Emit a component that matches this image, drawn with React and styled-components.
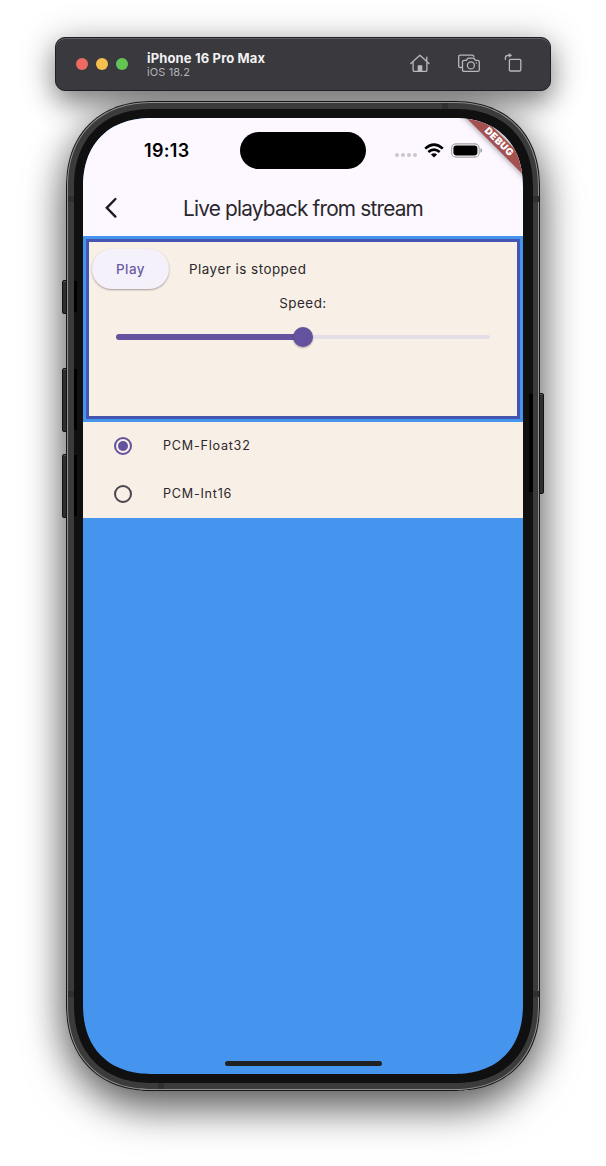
import React from "react";
import styled, { createGlobalStyle } from "styled-components";

const GlobalStyle = createGlobalStyle`
  *, *::before, *::after { box-sizing: border-box; }
  body {
    margin: 0;
    background: #fff;
    font-family: Inter, "Liberation Sans", sans-serif;
    overflow: hidden;
  }
`;

const Desktop = styled.main`
  width: 606px;
  height: 1166px;
  padding-top: 37px;
  display: flex;
  flex-direction: column;
  align-items: center;
  gap: 10px;
  overflow: hidden;
  isolation: isolate;
`;

const TitleBar = styled.header`
  width: 496px;
  height: 54px;
  flex: none;
  display: flex;
  align-items: center;
  padding: 0 26px 0 21px;
  border-radius: 10px;
  background: #39393e;
  border: 1px solid #1f1f22;
  box-shadow: inset 0 1px 0 #606064, 0 12px 26px rgba(0, 0, 0, 0.38), 0 3px 38px rgba(0, 0, 0, 0.24);
`;

const TrafficLights = styled.div`
  display: flex;
  gap: 8px;
  margin-left: -1px;
`;

const Light = styled.span`
  width: 12px;
  height: 12px;
  border-radius: 50%;
  background: ${(p) => p.$color};
`;

const DeviceInfo = styled.div`
  flex: 1;
  margin-left: 19px;
`;

const DeviceName = styled.div`
  font-size: 13px;
  line-height: 16px;
  font-weight: 700;
  letter-spacing: 0.15px;
  color: #f1f1f2;
`;

const DeviceOs = styled.div`
  font-size: 11px;
  line-height: 13px;
  letter-spacing: 0.1px;
  color: #b5b5b8;
`;

const Tools = styled.div`
  display: flex;
  align-items: center;

  svg {
    display: block;
    fill: none;
    stroke: #b9b9bc;
    stroke-width: 1.3;
    stroke-linecap: round;
    stroke-linejoin: round;
  }
  svg:nth-child(2) { margin: 0 22px 0 26px; }
  svg:nth-child(3) { margin-right: 1px; }
`;

const Phone = styled.section`
  position: relative;
  width: 474px;
  height: 990px;
  flex: none;
  padding: 1px;
  border-radius: 86px;
  corner-shape: superellipse(1.15);
  background: #161616;

  &::before {
    content: "";
    position: absolute;
    inset: 0;
    z-index: -1;
    border-radius: 84px;
    box-shadow: 0 18px 42px rgba(0, 0, 0, 0.58), 0 0 38px rgba(0, 0, 0, 0.24);
  }
`;

const Rim = styled.div`
  height: 100%;
  padding: 1px;
  border-radius: 85px;
  corner-shape: superellipse(1.15);
  background: #8f8f8f;
`;

const Frame = styled.div`
  position: relative;
  height: 100%;
  padding: 6px 5.5px;
  border-radius: 84px;
  corner-shape: superellipse(1.15);
  background: #3b3b3b;
`;

const Bezel = styled.div`
  height: 100%;
  padding: 9px 9.5px;
  border-radius: 78px;
  corner-shape: superellipse(1.17);
  background: #101010;
`;

const Screen = styled.div`
  position: relative;
  height: 100%;
  border-radius: 70px;
  corner-shape: superellipse(1.2);
  overflow: hidden;
  background: #4595ef;
  display: flex;
  flex-direction: column;
`;

const SideButton = styled.span`
  position: absolute;
  top: ${(p) => p.$top}px;
  ${(p) => p.$side}: -4px;
  width: 5px;
  height: ${(p) => p.$height}px;
  background: #2e2e2e;
  border: 1px solid #131313;
  border-radius: ${(p) => (p.$side === "left" ? "2px 0 0 2px" : "0 2px 2px 0")};
  box-shadow: inset 0 1px 0 #555;

  &::after {
    content: "";
    position: absolute;
    top: 0;
    ${(p) => (p.$side === "left" ? "left: 11px; width: 3px;" : "right: 10px; width: 4px;")}
    height: calc(100% - 1px);
    background: #000;
  }
`;

const Antenna = styled.span`
  position: absolute;
  background: #303030;
  width: 6px;
  height: 6px;
  ${(p) => p.$edge}: ${(p) => (p.$vertical ? "-0.5px" : "0")};
  ${(p) => (p.$vertical ? "top" : "left")}: ${(p) => p.$at}px;
`;

const StatusBar = styled.div`
  height: 62px;
  flex: none;
  display: flex;
  background: #fdf8ff;
  padding: 14px 40px 0 61px;
`;

const Clock = styled.div`
  width: 96px;
  line-height: 38px;
  font-size: 18px;
  font-weight: 600;
  letter-spacing: 0.3px;
  color: #000;
`;

const Island = styled.div`
  width: 126px;
  height: 37px;
  border-radius: 19px;
  background: #000;
`;

const StatusIcons = styled.div`
  flex: 1;
  height: 37px;
  display: flex;
  align-items: center;
  justify-content: flex-end;
`;

const SignalDots = styled.div`
  display: flex;
  gap: 2px;
  margin: 9px 7px 0 0;

  i {
    width: 4px;
    height: 4px;
    border-radius: 50%;
    background: #cbc7ce;
  }
`;

const WifiIcon = styled.svg`
  width: 20px;
  height: 15px;
  margin-right: 7px;
`;

const BatteryIcon = styled.svg`
  width: 32px;
  height: 15px;
`;

const AppBar = styled.div`
  height: 56px;
  flex: none;
  display: flex;
  align-items: center;
  background: #fdf8ff;
`;

const BackIcon = styled.svg`
  width: 56px;
  height: 56px;
  fill: none;
  stroke: #1d1b20;
  stroke-width: 2.4;
  stroke-linecap: round;
`;

const Title = styled.h1`
  flex: 1;
  margin: 2px 56px 0 0;
  text-align: center;
  font-size: 20.8px;
  line-height: 26px;
  font-weight: 400;
  letter-spacing: -0.8px;
  white-space: nowrap;
  color: #29272c;
`;

const PlayerPanel = styled.section`
  height: 180px;
  flex: none;
  margin: 3px;
  padding: 3px;
  border: 3px solid #4556b2;
  background: #f8efe6;
`;

const PlayerRow = styled.div`
  height: 48px;
  display: flex;
  align-items: center;
  gap: 20px;
`;

const bodyText = `
  font-size: 13.4px;
  letter-spacing: 0.5px;
  color: #2a282c;
`;

const PlayButton = styled.button`
  width: 77px;
  height: 40px;
  padding: 0;
  border: 0;
  border-radius: 20px;
  background: #f5f1fa;
  box-shadow: 0 1px 2px rgba(0, 0, 0, 0.34);
  font: 500 13.4px Inter, sans-serif;
  letter-spacing: 0.45px;
  color: #6c5aa5;
`;

const Status = styled.span`
  ${bodyText}
`;

const SpeedLabel = styled.div`
  ${bodyText}
  text-align: center;
  line-height: 20px;
`;

const Slider = styled.div`
  height: 48px;
  padding: 0 24px;
  display: flex;
  align-items: center;
`;

const Track = styled.span`
  flex: 1;
  height: ${(p) => (p.$active ? 6 : 4)}px;
  background: ${(p) => (p.$active ? "#64529e" : "#e4dee8")};
  border-radius: ${(p) => (p.$active ? "3px 0 0 3px" : "0 2px 2px 0")};
`;

const Thumb = styled.span`
  width: 20px;
  height: 20px;
  margin: 0 -1px;
  border-radius: 50%;
  background: #64529e;
  box-shadow: 0 1px 2px rgba(0, 0, 0, 0.3);
  z-index: 1;
`;

const Option = styled.label`
  height: 48px;
  flex: none;
  display: flex;
  align-items: center;
  gap: 31px;
  padding-left: 31px;
  background: #f8efe6;
`;

const OptionLabel = styled.span`
  margin-bottom: 2px;
  font-size: 12.6px;
  letter-spacing: 0.76px;
  color: #2a282c;
`;

const Radio = styled.span`
  width: 18px;
  height: 18px;
  border: 2px solid ${(p) => (p.$checked ? "#64529e" : "#49454f")};
  border-radius: 50%;
  display: grid;
  place-items: center;

  &::after {
    content: "";
    width: ${(p) => (p.$checked ? 10 : 0)}px;
    height: ${(p) => (p.$checked ? 10 : 0)}px;
    border-radius: 50%;
    background: #64529e;
  }
`;

const DebugBanner = styled.span`
  position: absolute;
  top: 18px;
  right: -41px;
  width: 130px;
  height: 12px;
  transform: rotate(45deg);
  background: #a5504e;
  box-shadow: 0 0 6px rgba(0, 0, 0, 0.5);
  color: #fff;
  font-size: 9.8px;
  line-height: 12px;
  font-weight: 900;
  letter-spacing: 0.5px;
  text-align: center;
`;

const HomeIndicator = styled.span`
  position: absolute;
  left: 142px;
  bottom: 8px;
  width: 157px;
  height: 5px;
  border-radius: 3px;
  background: #202123;
`;

const options = [
  { label: "PCM-Float32", checked: true },
  { label: "PCM-Int16", checked: false },
];

const sideButtons = [
  { side: "left", top: 179, height: 34 },
  { side: "left", top: 267, height: 64 },
  { side: "left", top: 353, height: 64 },
  { side: "right", top: 292, height: 101 },
];

function ToolIcons() {
  return (
    <Tools>
      <svg width="22" height="22" viewBox="0 0 22 22">
        <path d="M1.8 10.5 10.9 2.2 20 10.5M4.1 9v8.2q0 1.2 1.2 1.2h11.4q1.2 0 1.2-1.2V9M17.8 7.5V4.1" />
        <path d="M9.3 18v-5.2h3.4V18z" fill="#b9b9bc" />
      </svg>
      <svg width="24" height="22" viewBox="0 0 24 22">
        <path d="M4.4 14.5H3.2Q1.7 14.5 1.7 13V3.6q0-1.4 1.5-1.4h12.2q1.3 0 1.5 1.3" />
        <path d="M7.2 7.3h2.1l1.4-1.8q.3-.4.9-.4h4.6q.6 0 .9.4l1.4 1.8h2.1q1.7 0 1.7 1.7v7.7q0 1.7-1.7 1.7H7.2q-1.7 0-1.7-1.7V9q0-1.7 1.7-1.7z" />
        <circle cx="13.9" cy="12.4" r="3.5" />
        <path d="M19.3 9.9h.2" />
      </svg>
      <svg width="20" height="22" viewBox="0 0 20 22">
        <rect x="6.4" y="6.4" width="11.4" height="11.6" rx="1.2" />
        <path d="M2.4 6.4V5Q2.4 2.4 5 2.4H7" />
        <path d="M6.2.6 8.8 2.4 6.2 4.2z" fill="#b9b9bc" strokeWidth=".5" />
      </svg>
    </Tools>
  );
}

export default function App() {
  return (
    <>
      <GlobalStyle />
      <Desktop>
        <TitleBar>
          <TrafficLights>
            <Light $color="#ed6b60" />
            <Light $color="#f5be4f" />
            <Light $color="#62c554" />
          </TrafficLights>
          <DeviceInfo>
            <DeviceName>iPhone 16 Pro Max</DeviceName>
            <DeviceOs>iOS 18.2</DeviceOs>
          </DeviceInfo>
          <ToolIcons />
        </TitleBar>

        <Phone>
          <Rim>
            <Frame>
              <Bezel>
                <Screen>
                  <StatusBar>
                    <Clock>19:13</Clock>
                    <Island />
                    <StatusIcons>
                      <SignalDots><i /><i /><i /><i /></SignalDots>
                      <WifiIcon viewBox="0 0 20 15" fill="none" stroke="#000" strokeWidth="2.6">
                        <path d="M1.2 5.6Q10-2.2 18.8 5.6M4.3 9Q10 4.2 15.7 9" />
                        <path d="M10 14.6 6.9 11.5Q10 9 13.1 11.5z" fill="#000" stroke="none" />
                      </WifiIcon>
                      <BatteryIcon viewBox="0 0 32 15">
                        <rect x=".6" y=".9" width="27.6" height="13.2" rx="4.4" fill="none" stroke="#a5a2a7" strokeWidth="1.1" />
                        <rect x="2.4" y="2.6" width="24" height="9.8" rx="2.8" />
                        <path d="M29.5 5.2Q31 5.8 31 7.5T29.5 9.8z" fill="#8f8c91" />
                      </BatteryIcon>
                    </StatusIcons>
                  </StatusBar>
                  <AppBar>
                    <BackIcon viewBox="0 0 56 56">
                      <path d="M32.4 19 23.8 27.8 32.4 36.6" />
                    </BackIcon>
                    <Title>Live playback from stream</Title>
                  </AppBar>
                  <PlayerPanel>
                    <PlayerRow>
                      <PlayButton>Play</PlayButton>
                      <Status>Player is stopped</Status>
                    </PlayerRow>
                    <SpeedLabel>Speed:</SpeedLabel>
                    <Slider>
                      <Track $active />
                      <Thumb />
                      <Track />
                    </Slider>
                  </PlayerPanel>
                  {options.map((o) => (
                    <Option key={o.label}>
                      <Radio $checked={o.checked} />
                      <OptionLabel>{o.label}</OptionLabel>
                    </Option>
                  ))}
                  <DebugBanner>DEBUG</DebugBanner>
                  <HomeIndicator />
                </Screen>
              </Bezel>
              <Antenna $edge="top" $at={374} />
              <Antenna $edge="bottom" $at={90} />
              <Antenna $vertical $edge="left" $at={93} />
              <Antenna $vertical $edge="right" $at={93} />
              <Antenna $vertical $edge="left" $at={888} />
              <Antenna $vertical $edge="right" $at={888} />
            </Frame>
          </Rim>
          {sideButtons.map((b) => (
            <SideButton key={b.side + b.top} $side={b.side} $top={b.top} $height={b.height} />
          ))}
        </Phone>
      </Desktop>
    </>
  );
}
